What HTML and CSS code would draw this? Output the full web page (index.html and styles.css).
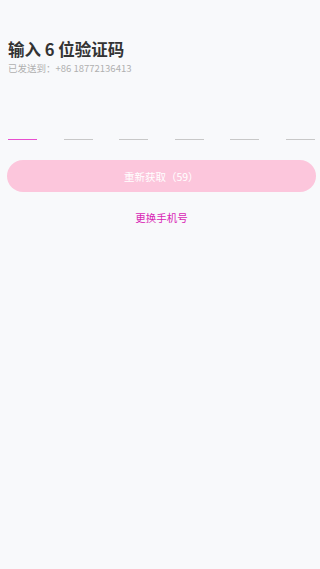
FILE: index.html
```html
<!DOCTYPE html>
<html lang="zh">
<head>
<meta charset="utf-8">
<meta name="viewport" content="width=device-width, initial-scale=1">
<link rel="stylesheet" href="styles.css">
</head>
<body>
<main class="page">
  <h1 class="title">输入 6 位验证码</h1>
  <p class="sub">已发送到：+86 18772136413</p>
  <div class="code">
    <span class="cell active"></span>
    <span class="cell"></span>
    <span class="cell"></span>
    <span class="cell"></span>
    <span class="cell"></span>
    <span class="cell"></span>
  </div>
  <button class="resend" type="button">重新获取（59）</button>
  <a class="change" href="#">更换手机号</a>
</main>
</body>
</html>
```
FILE: styles.css
```css
html, body {
  margin: 0;
  padding: 0;
  background: #f8f9fb;
  height: 100%;
}
.page {
  font-family: "Noto Sans CJK SC", "Noto Sans", sans-serif;
  padding: 38px 5px 0 8px;
  display: flex;
  flex-direction: column;
}
.title {
  margin: 0;
  font-size: 16.5px;
  line-height: 22px;
  font-weight: 700;
  color: #333;
}
.sub {
  margin: 1px 0 0 0;
  font-size: 9.5px;
  line-height: 14px;
  color: #b0b0b0;
}
.code {
  margin-top: 64px;
  display: flex;
  justify-content: space-between;
}
.cell {
  width: 29px;
  height: 1px;
  background: #c8c8c8;
}
.cell.active {
  background: #e84fcf;
}
.resend {
  margin: 20px -1px 0 -1.5px;
  height: 32px;
  border: none;
  border-radius: 16px;
  background: #fcc6dc;
  color: #fff;
  font-family: inherit;
  font-size: 10.5px;
  padding: 0;
}
.change {
  margin-top: 18px;
  align-self: center;
  font-size: 10.5px;
  line-height: 16px;
  color: #d91fb5;
  text-decoration: none;
}
```
